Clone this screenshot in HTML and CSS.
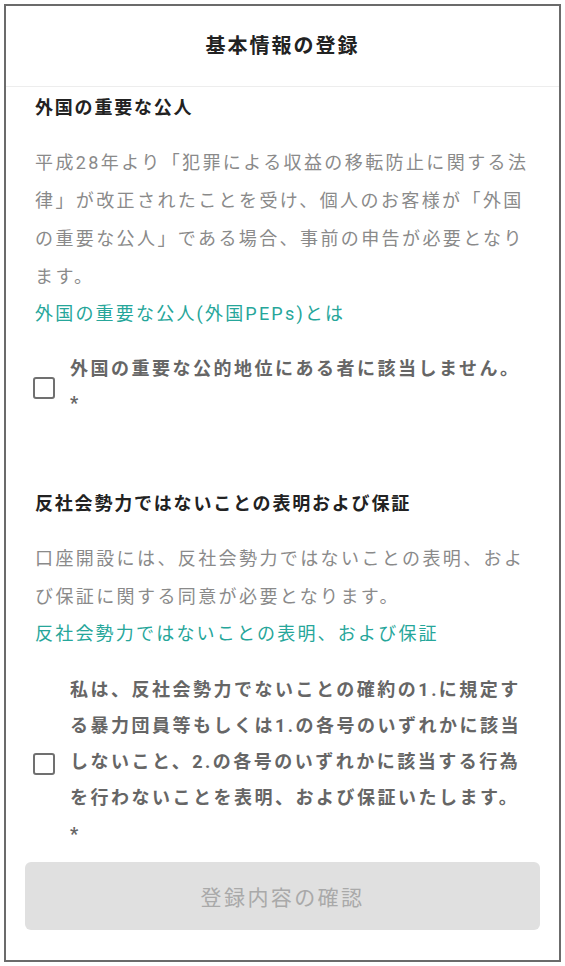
FILE: index.html
```html
<!DOCTYPE html>
<html lang="ja">
<head>
<meta charset="utf-8">
<title>基本情報の登録</title>
<link rel="stylesheet" href="styles.css">
</head>
<body>
<div class="frame">
  <header class="top-bar">
    <h1 class="top-title">基本情報の登録</h1>
  </header>
  <main class="content">
    <section class="block block-first">
      <h2 class="block-title">外国の重要な公人</h2>
      <p class="desc">平成28年より「犯罪による収益の移転防止に関する法律」が改正されたことを受け、個人のお客様が「外国の重要な公人」である場合、事前の申告が必要となります。</p>
      <a class="link" href="#">外国の重要な公人(外国PEPs)とは</a>
      <label class="check">
        <span class="box"></span>
        <span class="check-text">外国の重要な公的地位にある者に該当しません。<span class="req">*</span></span>
      </label>
    </section>
    <section class="block block-second">
      <h2 class="block-title">反社会勢力ではないことの表明および保証</h2>
      <p class="desc">口座開設には、反社会勢力ではないことの表明、および保証に関する同意が必要となります。</p>
      <a class="link" href="#">反社会勢力ではないことの表明、および保証</a>
      <label class="check check-long">
        <span class="box"></span>
        <span class="check-text">私は、反社会勢力でないことの確約の1.に規定する暴力団員等もしくは1.の各号のいずれかに該当しないこと、2.の各号のいずれかに該当する行為を行わないことを表明、および保証いたします。<span class="req">*</span></span>
      </label>
    </section>
    <button class="submit" type="button" disabled>登録内容の確認</button>
  </main>
</div>
</body>
</html>
```

FILE: styles.css
```css
* {
  box-sizing: border-box;
}

html, body {
  margin: 0;
  padding: 0;
  background: #ffffff;
}

body {
  padding: 4px;
  font-family: Roboto, "Noto Sans CJK JP", sans-serif;
  color: #222222;
}

.frame {
  height: 958px;
  border: 2px solid #6b6b6b;
  background: #ffffff;
  display: flex;
  flex-direction: column;
  overflow: hidden;
}

.top-bar {
  height: 81px;
  flex: 0 0 81px;
  border-bottom: 1px solid #ededed;
  display: flex;
  align-items: center;
  justify-content: center;
}

.top-title {
  margin: 0;
  font-size: 20px;
  font-weight: 700;
  letter-spacing: 2px;
  color: #222222;
  line-height: 1;
}

.content {
  padding: 0 19px;
  display: flex;
  flex-direction: column;
}

.block {
  padding: 0 10px 0 10px;
}

.block-first {
  padding-top: 7px;
}

.block-second {
  margin-top: 70px;
}

.block-title {
  margin: 0;
  font-size: 18px;
  font-weight: 700;
  line-height: 28px;
  letter-spacing: 1.8px;
  color: #222222;
}

.desc {
  margin: 22px 0 0;
  font-size: 18px;
  line-height: 38px;
  letter-spacing: 2.4px;
  color: #8a8a8a;
}

.link {
  display: block;
  font-size: 18px;
  line-height: 36px;
  letter-spacing: 2.2px;
  color: #26a69a;
  text-decoration: none;
}

.check {
  display: flex;
  align-items: center;
  gap: 15px;
  margin-top: 20px;
}

.box {
  flex: 0 0 22px;
  width: 22px;
  height: 22px;
  border: 2px solid #707070;
  border-radius: 3px;
  margin-left: -2px;
  margin-top: 4px;
}

.check-text {
  font-size: 18px;
  font-weight: 700;
  line-height: 34px;
  letter-spacing: 2.5px;
  color: #666666;
}

.check-long .check-text {
  line-height: 36px;
}

.req {
  display: block;
}

.submit {
  margin-top: 10px;
  height: 68px;
  width: 100%;
  border: none;
  border-radius: 6px;
  background: #e0e0e0;
  color: #a9a9a9;
  font-family: Roboto, "Noto Sans CJK JP", sans-serif;
  font-size: 21px;
  letter-spacing: 2.4px;
  cursor: default;
}
```
